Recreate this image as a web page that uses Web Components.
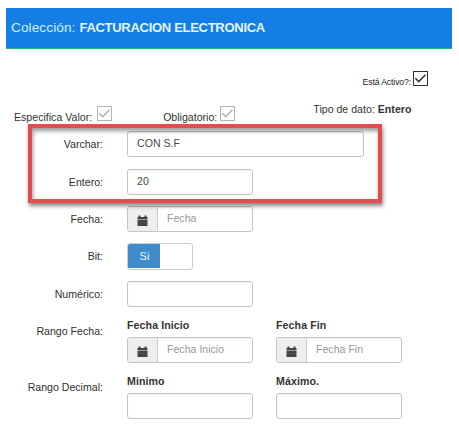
<!DOCTYPE html>
<html lang="es">
<head>
<meta charset="utf-8">
<title>Colección</title>
<style>
html,body{margin:0;background:#fff}
body{width:459px;height:425px;overflow:hidden;font:10.6px/14px "Liberation Sans",Arial,sans-serif;color:#333}
</style>
</head>
<body>
<collection-page></collection-page>
<script>
const define = (name, html, setup) => customElements.define(name, class extends HTMLElement {
  connectedCallback() {
    if (this.shadowRoot) return;
    const t = document.createElement('template');
    t.innerHTML = html;
    this.attachShadow({mode: 'open'}).append(t.content.cloneNode(true));
    if (setup) setup(this, this.shadowRoot);
  }
});

define('title-bar', `<style>
:host{display:flex;align-items:center;box-sizing:border-box;height:41px;margin:0 7px 0 6px;padding:0 0 1px 5px;background:#157ee5;border-bottom:1px solid #27b76a;color:#d3effc;font-size:13px;line-height:18px;white-space:pre}
span{font-size:13.6px;letter-spacing:.1px}
b{color:#e2f7ff;letter-spacing:-.29px;margin-left:4px}
</style><span>Colección:</span><b><slot></slot></b>`);

define('check-box', `<style>
:host{display:block;width:15px;height:15px;color:#b4b4b4}
:host([active]){color:#333}
svg{display:block}
</style><svg width="15" height="15" viewBox="0 0 15 15" fill="none" stroke="currentColor"><rect x=".5" y=".5" width="14" height="14"/><path d="M2.3 7.2 5.7 10.6 12.5 3.8" stroke-width="1.5"/></svg>`);

define('check-field', `<style>
:host{display:flex;align-items:flex-start;white-space:nowrap}
span{padding-top:4px;margin-right:5px}
:host([tight]) span{margin-right:3px}
:host([small]) span{font-size:8.6px;letter-spacing:-.1px;padding-top:4px;margin-right:2px;color:#222}
</style><span><slot></slot></span><check-box></check-box>`,
(el, root) => { if (el.hasAttribute('active')) root.querySelector('check-box').setAttribute('active', ''); });

define('calendar-icon', `<style>:host{display:block;width:11px;height:11px}svg{display:block}</style>
<svg width="11" height="11" viewBox="0 0 11 11"><path fill="#444" d="M.5 2h1V.5h2V2h4V.5h2V2h1v2.4H.5z"/><path fill="#444" d="M.5 5h10v6H.5z"/><path stroke="#777" stroke-width=".5" stroke-dasharray="1 1" d="M1.5 7.5h8"/></svg>`);

define('text-field', `<style>
:host{display:flex;box-sizing:border-box;width:126px;height:26px;border:1px solid #c4c4c4;border-radius:3px;background:#fff;overflow:hidden;box-shadow:inset 0 1px 1px #0000000d}
:host([wide]){width:237px}
.icon{display:flex;align-items:center;justify-content:center;box-sizing:border-box;width:30px;padding:3px 1px 0 0;background:#eee;border-right:1px solid #ccc}
:host(:not([date])) .icon{display:none}
.value{padding:4px 0 0 9px;color:#484848;white-space:nowrap}
:host([date]) .value{color:#999}
</style><div class="icon"><calendar-icon></calendar-icon></div><div class="value"><slot></slot></div>`);

define('toggle-switch', `<style>
:host{display:flex;box-sizing:border-box;width:66px;height:27px;border:1px solid #ccc;border-radius:3px;overflow:hidden;background:#fff}
div{width:32px;height:24px;background:#428bca;color:#e4f6ff;text-align:center;line-height:25px;font-size:11px;text-indent:1px}
</style><div><slot></slot></div>`);

define('form-row', `<style>
:host{display:grid;grid-template-columns:103px auto;column-gap:24px;justify-content:start;height:37px}
:host([tall]){height:38px}
:host([range]){height:56px}
.label{text-align:right;padding-top:6px;color:#303030;white-space:nowrap}
:host([range]) .label{padding-top:5px}
.fields{display:flex;gap:23px;align-items:flex-start}
</style><div class="label"></div><div class="fields"><slot></slot></div>`,
(el, root) => { root.querySelector('.label').textContent = el.getAttribute('label'); });

define('titled-field', `<style>
:host{display:block}
b{display:block;height:18px;line-height:12px;white-space:nowrap;color:#333;letter-spacing:.1px}
</style><b></b><slot></slot>`,
(el, root) => { root.querySelector('b').textContent = el.getAttribute('heading'); });

define('highlight-frame', `<style>
:host{position:absolute;left:28px;top:124px;width:354px;height:79px;box-sizing:border-box;border:4px solid #e34d50;box-shadow:1px 3px 4px #0007,inset 1px 3px 4px #0006;pointer-events:none}
</style>`);

define('collection-page', `<style>
:host{display:block;box-sizing:border-box;position:relative;width:459px;height:425px;padding-top:8px}
.status{display:flex;justify-content:flex-end;height:15px;padding:22px 31px 0 0}
.options{display:flex;height:45px;align-items:flex-start}
.options>*:nth-child(1){margin:20px 0 0 14px}
.options>*:nth-child(2){margin:20px 0 0 51px}
.type{margin:16px 0 0 78px;white-space:pre}
.type b{letter-spacing:.05px}
</style>
<title-bar>FACTURACION ELECTRONICA</title-bar>
<div class="status"><check-field small active>Está Activo?:</check-field></div>
<div class="options"><check-field>Especifica Valor:</check-field><check-field tight>Obligatorio:</check-field><div class="type">Tipo de dato: <b>Entero</b></div></div>
<form-row label="Varchar:" tall><text-field wide>CON S.F</text-field></form-row>
<form-row label="Entero:"><text-field>20</text-field></form-row>
<form-row label="Fecha:"><text-field date>Fecha</text-field></form-row>
<form-row label="Bit:" tall><toggle-switch>Si</toggle-switch></form-row>
<form-row label="Numérico:" tall><text-field></text-field></form-row>
<form-row label="Rango Fecha:" range><titled-field heading="Fecha Inicio"><text-field date>Fecha Inicio</text-field></titled-field><titled-field heading="Fecha Fin"><text-field date>Fecha Fin</text-field></titled-field></form-row>
<form-row label="Rango Decimal:" range><titled-field heading="Minimo"><text-field></text-field></titled-field><titled-field heading="Máximo."><text-field></text-field></titled-field></form-row>
<highlight-frame></highlight-frame>`);
</script>
</body>
</html>
